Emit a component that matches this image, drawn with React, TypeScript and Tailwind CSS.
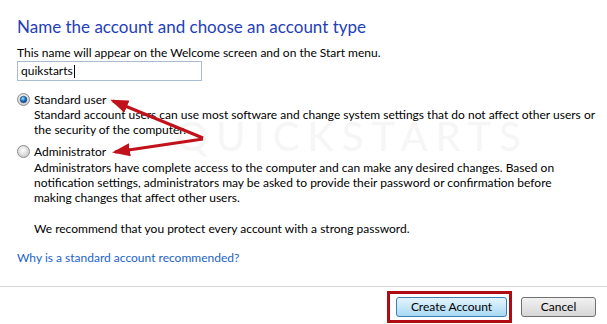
import React from "react";

function Radio({ checked }: { checked: boolean }) {
  return (
    <svg width="13" height="13" viewBox="0 0 13 13" className="shrink-0">
      <defs>
        <radialGradient id={checked ? "rg1" : "rg0"} cx="45%" cy="40%" r="60%">
          <stop offset="0%" stopColor="#ffffff" />
          <stop offset="100%" stopColor="#c9c9c9" />
        </radialGradient>
        <radialGradient id="dot" cx="40%" cy="35%" r="65%">
          <stop offset="0%" stopColor="#9fe0ff" />
          <stop offset="60%" stopColor="#1b6fc0" />
          <stop offset="100%" stopColor="#0c3f86" />
        </radialGradient>
      </defs>
      <circle cx="6.5" cy="6.5" r="6" fill={`url(#${checked ? "rg1" : "rg0"})`} stroke="#8e8f8f" strokeWidth="1" />
      {checked && <circle cx="6.5" cy="6.5" r="3.3" fill="url(#dot)" stroke="#1a4c8a" strokeWidth="0.6" />}
    </svg>
  );
}

export default function App() {
  return (
    <div
      className="relative w-[607px] h-[324px] overflow-hidden bg-white text-black"
      style={{ fontFamily: '"Lato", "Noto Sans", sans-serif' }}
    >
      {/* watermark */}
      <div className="pointer-events-none absolute left-[176px] top-[112px] text-[40px] leading-[48px] tracking-[8px] text-[#f6f6f6] select-none">
        QUICKSTARTS
      </div>

      <div className="relative flex flex-col pl-[17px] pt-[16px]">
        <div className="text-[17px] leading-[22px] text-[#1f40b8]">
          Name the account and choose an account type
        </div>
        <div className="mt-[7px] text-[12px] leading-[15px]">
          This name will appear on the Welcome screen and on the Start menu.
        </div>
        <div className="mt-[1px] flex h-[20px] w-[185px] items-center border border-[#a9bcd3] px-[3px] text-[12px]">
          <span>quikstarts</span>
          <span className="ml-[1px] h-[13px] w-[1px] bg-black" />
        </div>

        <div className="mt-[11px] flex items-center gap-[4px] text-[12px] leading-[15px]">
          <Radio checked />
          <span>Standard user</span>
        </div>
        <div className="pl-[17px] text-[12px] leading-[15px]">
          Standard account users can use most software and change system settings that do not affect other users or
          <br />
          the security of the computer.
        </div>

        <div className="mt-[7px] flex items-center gap-[4px] text-[12px] leading-[15px]">
          <Radio checked={false} />
          <span>Administrator</span>
        </div>
        <div className="mt-[1px] pl-[17px] text-[12px] leading-[15px]">
          Administrators have complete access to the computer and can make any desired changes. Based on
          <br />
          notification settings, administrators may be asked to provide their password or confirmation before
          <br />
          making changes that affect other users.
        </div>
        <div className="mt-[16px] pl-[17px] text-[12px] leading-[15px]">
          We recommend that you protect every account with a strong password.
        </div>
        <div className="mt-[14px] text-[12px] leading-[15px] text-[#1a64c8]">
          Why is a standard account recommended?
        </div>
      </div>

      <div className="absolute left-0 right-0 top-[286px] h-[1px] bg-[#d5d5d5]" />

      <div className="absolute right-[11px] top-[297px] flex items-center gap-[14px] text-[12px]">
        <div className="relative h-[20px] w-[111px] rounded-[3px] border border-[#3c7fb1] bg-gradient-to-b from-[#e5f4fc] to-[#a7d9f5] flex items-center justify-center">
          Create Account
          <div className="absolute -left-[10px] -top-[7px] h-[32px] w-[125px] border-[3px] border-[#b00a12]" />
        </div>
        <div className="h-[20px] w-[75px] rounded-[3px] border border-[#707070] bg-gradient-to-b from-[#f2f2f2] to-[#d6d6d6] flex items-center justify-center">
          Cancel
        </div>
      </div>

      {/* arrows */}
      <svg className="pointer-events-none absolute left-0 top-0" width="607" height="324">
        <defs>
          <marker id="ah" markerWidth="6" markerHeight="4.4" refX="5" refY="2.2" orient="auto" markerUnits="strokeWidth">
            <polygon points="0,0 6,2.2 0,4.4" fill="#c1121c" />
          </marker>
        </defs>
        <line x1="203" y1="138" x2="113" y2="101" stroke="#c1121c" strokeWidth="3" markerEnd="url(#ah)" />
        <line x1="203" y1="139" x2="115" y2="152" stroke="#c1121c" strokeWidth="3" markerEnd="url(#ah)" />
      </svg>
    </div>
  );
}
